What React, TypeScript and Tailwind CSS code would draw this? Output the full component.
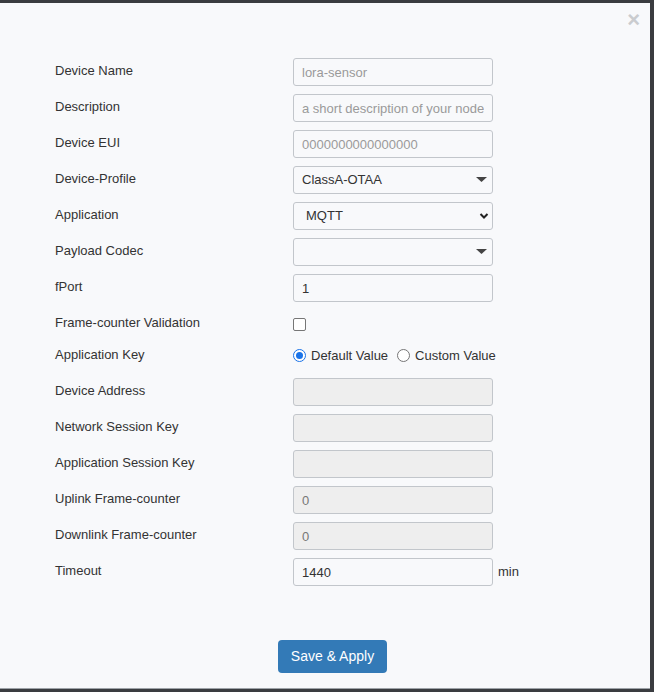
import React from "react"

const font = { fontFamily: '"Liberation Sans", Arial, sans-serif' }

function TextRow({ label, placeholder, value, disabled, suffix }: { label: string; placeholder?: string; value?: string; disabled?: boolean; suffix?: string }) {
  return (
    <>
      <div className="pt-[5px] text-[13px] leading-[15px] text-[#333]">{label}</div>
      <div className="flex items-center">
        <input
          className={`h-[28px] w-[200px] rounded-[3px] border border-[#c2c6cb] px-[8px] text-[13px] outline-none placeholder:text-[#9a9a9a] ${disabled ? "bg-[#eeeeee] text-[#777]" : "bg-[#f8f9fb] text-[#333]"}`}
          placeholder={placeholder}
          defaultValue={value}
          disabled={disabled}
          style={font}
        />
        {suffix && <span className="ml-[5px] text-[13px] text-[#333]">{suffix}</span>}
      </div>
    </>
  )
}

function SelectRow({ label, value, chevron }: { label: string; value: string; chevron?: boolean }) {
  return (
    <>
      <div className="pt-[5px] text-[13px] leading-[15px] text-[#333]">{label}</div>
      <div className="relative h-[28px] w-[200px]">
        <div className={`flex h-full w-full items-center rounded-[3px] border border-[#c2c6cb] bg-[#f8f9fb] text-[13px] text-[#333] ${chevron ? "pl-[12px]" : "pl-[8px]"}`}>
          {value}
        </div>
        {chevron ? (
          <svg className="absolute right-[4px] top-[9px]" width="10" height="10" viewBox="0 0 10 10">
            <path d="M1.5 3 L5 6.5 L8.5 3" fill="none" stroke="#222" strokeWidth="2" />
          </svg>
        ) : (
          <svg className="absolute right-[5px] top-[11px]" width="12" height="6" viewBox="0 0 12 6">
            <path d="M0 0 H11 L5.5 5 Z" fill="#444" />
          </svg>
        )}
      </div>
    </>
  )
}

export default function App() {
  return (
    <div className="h-[692px] w-[654px] bg-[#3a3c40] pb-[3px] pr-[4px] pt-[3px]" style={font}>
      <div className="flex h-full flex-col border-b border-[#9ea3a8] bg-[#f8f9fb]">
        <div className="flex h-[55px] justify-end pr-[10px] pt-[6px]">
          <span className="text-[22px] font-bold leading-[22px] text-[#cacccf]">×</span>
        </div>
        <div className="grid grid-cols-[238px_auto] gap-y-[8px] pl-[55px]">
          <TextRow label="Device Name" placeholder="lora-sensor" />
          <TextRow label="Description" placeholder="a short description of your node" />
          <TextRow label="Device EUI" placeholder="0000000000000000" />
          <SelectRow label="Device-Profile" value="ClassA-OTAA" />
          <SelectRow label="Application" value="MQTT" chevron />
          <SelectRow label="Payload Codec" value="" />
          <TextRow label="fPort" value="1" />

          <div className="pt-[5px] text-[13px] leading-[15px] text-[#333]">Frame-counter Validation</div>
          <div className="flex h-[28px] items-center">
            <span className="h-[13px] w-[13px] rounded-[2px] border border-[#767676] bg-white" />
          </div>

          <div className="pt-[1px] text-[13px] leading-[15px] text-[#333]">Application Key</div>
          <div className="flex h-[24px] items-start pt-[2px] text-[13px] text-[#333]">
            <span className="mr-[5px] mt-[1px] flex h-[13px] w-[13px] items-center justify-center rounded-full border border-[#1a73e8] bg-white">
              <span className="h-[7px] w-[7px] rounded-full bg-[#1a73e8]" />
            </span>
            <span className="leading-[15px]">Default Value</span>
            <span className="ml-[9px] mr-[5px] mt-[1px] h-[13px] w-[13px] rounded-full border border-[#767676] bg-white" />
            <span className="leading-[15px]">Custom Value</span>
          </div>

          <TextRow label="Device Address" disabled />
          <TextRow label="Network Session Key" disabled />
          <TextRow label="Application Session Key" disabled />
          <TextRow label="Uplink Frame-counter" value="0" disabled />
          <TextRow label="Downlink Frame-counter" value="0" disabled />
          <TextRow label="Timeout" value="1440" suffix="min" />
        </div>
        <div className="pl-[278px] pt-[54px]">
          <button className="h-[33px] w-[109px] rounded-[4px] bg-[#337ab7] text-[14px] text-white" style={font}>
            Save &amp; Apply
          </button>
        </div>
      </div>
    </div>
  )
}
